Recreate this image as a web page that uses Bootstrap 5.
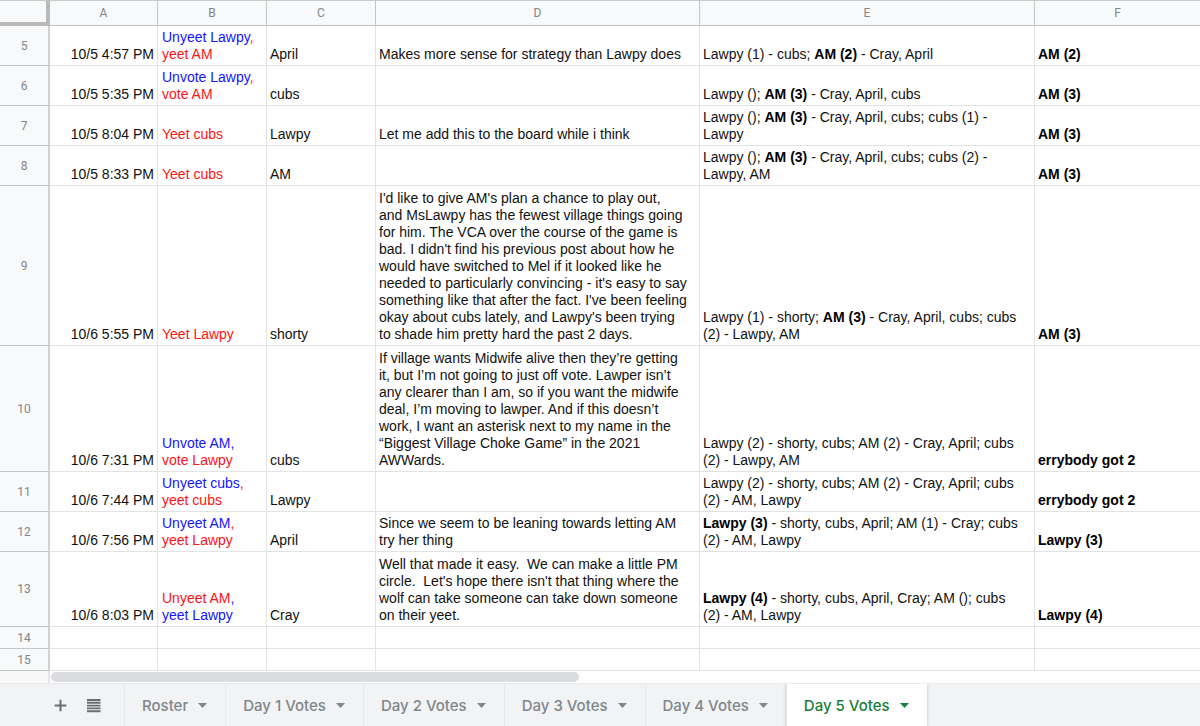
<!DOCTYPE html>
<html lang="en">
<head>
<meta charset="utf-8">
<meta name="viewport" content="width=device-width, initial-scale=1">
<title>Day 5 Votes</title>
<link href="https://cdn.jsdelivr.net/npm/bootstrap@5.3.0/dist/css/bootstrap.min.css" rel="stylesheet">
<style>
  body { font-family: "Liberation Sans", Arial, sans-serif; font-size: 14px; line-height: 17px; color: #000; background: #fff; }

  /* Grid */
  .sheet { table-layout: fixed; border-collapse: separate; border-spacing: 0; color: #111; }
  .sheet > :not(caption) > * > * { padding: 3px 3px 2px; border: 0 solid #e2e3e3; border-width: 0 1px 1px 0; vertical-align: bottom; color: inherit; }
  .sheet > thead > tr > th,
  .sheet > tbody > tr > th { background: #f8f9fa; color: #80868b; border-color: #c4c6c6; font: 400 12px/14px Roboto, sans-serif; text-align: center; vertical-align: middle; padding: 0; }
  .sheet > thead > tr > th { height: 26px; border-top: 1px solid #c9cbcb; }
  .sheet > tbody > tr > th { border-right: 2px solid #d0d1d1; }
  .sheet > thead > tr > .corner { border-right: 4px solid #b9b9b9; border-bottom: 4px solid #b9b9b9; }
  .sheet > tbody > tr > td:nth-child(2) { text-align: right; }
  .sheet > tbody > tr > td:nth-child(3) { padding-left: 4px; }
  .sheet > tbody > tr > td:last-child { font-weight: 700; color: #000; }
  .sheet b { color: #000; }
  .sheet tr > :last-child { border-right-width: 0; }
  .col-num { width: 50px; }
  .col-time { width: 108px; }
  .col-name { width: 109px; }
  .col-reason { width: 324px; }
  .col-count { width: 335px; }
  .row-2 { height: 40px; }
  .row-4 { height: 75px; }
  .row-7 { height: 126px; }
  .row-9 { height: 160px; }
  .row-empty { height: 22px; }
  .blue { color: #1414ff; }
  .red { color: #ff1212; }

  /* Horizontal scrollbar */
  .scroll-gap { width: 50px; background: #f8f8f8; border-right: 2px solid #e6e6e6; }
  .scroll-track { height: 12px; padding: 1px; }
  .scroll-thumb { height: 10px; width: 46%; border-radius: 5px; background: #dadce0; }

  /* Sheet tabs */
  .sheet-bar { background: #f1f3f4; border-top: 1px solid #e8eaeb; min-height: 43px; }
  .sheet-bar button { border: 0; background: none; color: #80868b; }
  .tools { width: 124px; padding-left: 52px; gap: 16px; }
  .tools button { padding: 0; width: 17px; height: 17px; line-height: 0; }
  .tab { font: 500 15px/17px Inter, sans-serif; padding: 0 18px 0 17px; gap: 10px; }
  .sheet-bar .tab { border-left: 1px solid #e6e8ea; }
  .sheet-bar .tab.active { background: #fff; color: #188038; border-left-color: #e0e2e3; box-shadow: 0 1px 3px rgba(60, 64, 67, .3); }
</style>
</head>
<body class="d-flex flex-column min-vh-100">
<main>
  <table class="table sheet mb-0 w-100">
    <colgroup>
      <col class="col-num"><col class="col-time"><col class="col-name"><col class="col-name"><col class="col-reason"><col class="col-count"><col>
    </colgroup>
    <thead>
      <tr><th class="corner"></th><th scope="col">A</th><th scope="col">B</th><th scope="col">C</th><th scope="col">D</th><th scope="col">E</th><th scope="col">F</th></tr>
    </thead>
    <tbody>
      <tr class="row-2"><th scope="row">5</th><td>10/5 4:57 PM</td><td><span class="blue">Unyeet Lawpy</span><span class="red">,</span><br><span class="red">yeet AM</span></td><td>April</td><td>Makes more sense for strategy than Lawpy does</td><td>Lawpy (1) - cubs; <b>AM (2)</b> - Cray, April</td><td>AM (2)</td></tr>
      <tr class="row-2"><th scope="row">6</th><td>10/5 5:35 PM</td><td><span class="blue">Unvote Lawpy</span><span class="red">,</span><br><span class="red">vote AM</span></td><td>cubs</td><td></td><td>Lawpy (); <b>AM (3)</b> - Cray, April, cubs</td><td>AM (3)</td></tr>
      <tr class="row-2"><th scope="row">7</th><td>10/5 8:04 PM</td><td><span class="red">Yeet cubs</span></td><td>Lawpy</td><td>Let me add this to the board while i think</td><td>Lawpy (); <b>AM (3)</b> - Cray, April, cubs; cubs (1) -<br>Lawpy</td><td>AM (3)</td></tr>
      <tr class="row-2"><th scope="row">8</th><td>10/5 8:33 PM</td><td><span class="red">Yeet cubs</span></td><td>AM</td><td></td><td>Lawpy (); <b>AM (3)</b> - Cray, April, cubs; cubs (2) -<br>Lawpy, AM</td><td>AM (3)</td></tr>
      <tr class="row-9"><th scope="row">9</th><td>10/6 5:55 PM</td><td><span class="red">Yeet Lawpy</span></td><td>shorty</td><td>I'd like to give AM's plan a chance to play out,<br>and MsLawpy has the fewest village things going<br>for him. The VCA over the course of the game is<br>bad. I didn't find his previous post about how he<br>would have switched to Mel if it looked like he<br>needed to particularly convincing - it's easy to say<br>something like that after the fact. I've been feeling<br>okay about cubs lately, and Lawpy's been trying<br>to shade him pretty hard the past 2 days.</td><td>Lawpy (1) - shorty; <b>AM (3)</b> - Cray, April, cubs; cubs<br>(2) - Lawpy, AM</td><td>AM (3)</td></tr>
      <tr class="row-7"><th scope="row">10</th><td>10/6 7:31 PM</td><td><span class="blue">Unvote AM,</span><br><span class="red">vote Lawpy</span></td><td>cubs</td><td>If village wants Midwife alive then they’re getting<br>it, but I’m not going to just off vote. Lawper isn’t<br>any clearer than I am, so if you want the midwife<br>deal, I’m moving to lawper. And if this doesn’t<br>work, I want an asterisk next to my name in the<br>“Biggest Village Choke Game” in the 2021<br>AWWards.</td><td>Lawpy (2) - shorty, cubs; AM (2) - Cray, April; cubs<br>(2) - Lawpy, AM</td><td>errybody got 2</td></tr>
      <tr class="row-2"><th scope="row">11</th><td>10/6 7:44 PM</td><td><span class="blue">Unyeet cubs</span><span class="red">,</span><br><span class="red">yeet cubs</span></td><td>Lawpy</td><td></td><td>Lawpy (2) - shorty, cubs; AM (2) - Cray, April; cubs<br>(2) - AM, Lawpy</td><td>errybody got 2</td></tr>
      <tr class="row-2"><th scope="row">12</th><td>10/6 7:56 PM</td><td><span class="blue">Unyeet AM</span><span class="red">,</span><br><span class="red">yeet Lawpy</span></td><td>April</td><td>Since we seem to be leaning towards letting AM<br>try her thing</td><td><b>Lawpy (3)</b> - shorty, cubs, April; AM (1) - Cray; cubs<br>(2) - AM, Lawpy</td><td>Lawpy (3)</td></tr>
      <tr class="row-4"><th scope="row">13</th><td>10/6 8:03 PM</td><td><span class="red">Unyeet AM</span><span class="blue">,</span><br><span class="blue">yeet Lawpy</span></td><td>Cray</td><td>Well that made it easy.&nbsp; We can make a little PM<br>circle.&nbsp; Let's hope there isn't that thing where the<br>wolf can take someone can take down someone<br>on their yeet.</td><td><b>Lawpy (4)</b> - shorty, cubs, April, Cray; AM (); cubs<br>(2) - AM, Lawpy</td><td>Lawpy (4)</td></tr>
      <tr class="row-empty"><th scope="row">14</th><td></td><td></td><td></td><td></td><td></td><td></td></tr>
      <tr class="row-empty"><th scope="row">15</th><td></td><td></td><td></td><td></td><td></td><td></td></tr>
    </tbody>
  </table>
  <div class="d-flex">
    <div class="scroll-gap flex-shrink-0"></div>
    <div class="scroll-track flex-grow-1"><div class="scroll-thumb"></div></div>
  </div>
</main>
<nav class="sheet-bar d-flex flex-grow-1 align-items-stretch overflow-hidden" aria-label="Sheets">
  <div class="tools d-flex align-items-center flex-shrink-0">
    <button type="button" aria-label="Add sheet"><svg width="17" height="17" viewBox="0 0 17 17"><path d="M8.500 2.700v11.600M2.700 8.500h11.600" stroke="#6b6e71" stroke-width="2" fill="none"/></svg></button>
    <button type="button" aria-label="All sheets"><svg width="17" height="17" viewBox="0 0 17 17"><path d="M2 3h13.500M2 5.800h13.500M2 8.600h13.500M2 11.400h13.500M2 14.200h13.500" stroke="#6b6e71" stroke-width="1.900" fill="none"/></svg></button>
  </div>
  <button type="button" class="tab d-flex align-items-center text-nowrap">Roster<svg width="9" height="5" viewBox="0 0 9 5"><path d="M0 0h9L4.500 5z" fill="currentColor"/></svg></button>
  <button type="button" class="tab d-flex align-items-center text-nowrap">Day 1 Votes<svg width="9" height="5" viewBox="0 0 9 5"><path d="M0 0h9L4.500 5z" fill="currentColor"/></svg></button>
  <button type="button" class="tab d-flex align-items-center text-nowrap">Day 2 Votes<svg width="9" height="5" viewBox="0 0 9 5"><path d="M0 0h9L4.500 5z" fill="currentColor"/></svg></button>
  <button type="button" class="tab d-flex align-items-center text-nowrap">Day 3 Votes<svg width="9" height="5" viewBox="0 0 9 5"><path d="M0 0h9L4.500 5z" fill="currentColor"/></svg></button>
  <button type="button" class="tab d-flex align-items-center text-nowrap">Day 4 Votes<svg width="9" height="5" viewBox="0 0 9 5"><path d="M0 0h9L4.500 5z" fill="currentColor"/></svg></button>
  <button type="button" class="tab active d-flex align-items-center text-nowrap" aria-current="page">Day 5 Votes<svg width="9" height="5" viewBox="0 0 9 5"><path d="M0 0h9L4.500 5z" fill="currentColor"/></svg></button>
</nav>
<script src="https://cdn.jsdelivr.net/npm/bootstrap@5.3.0/dist/js/bootstrap.bundle.min.js"></script>
</body>
</html>
